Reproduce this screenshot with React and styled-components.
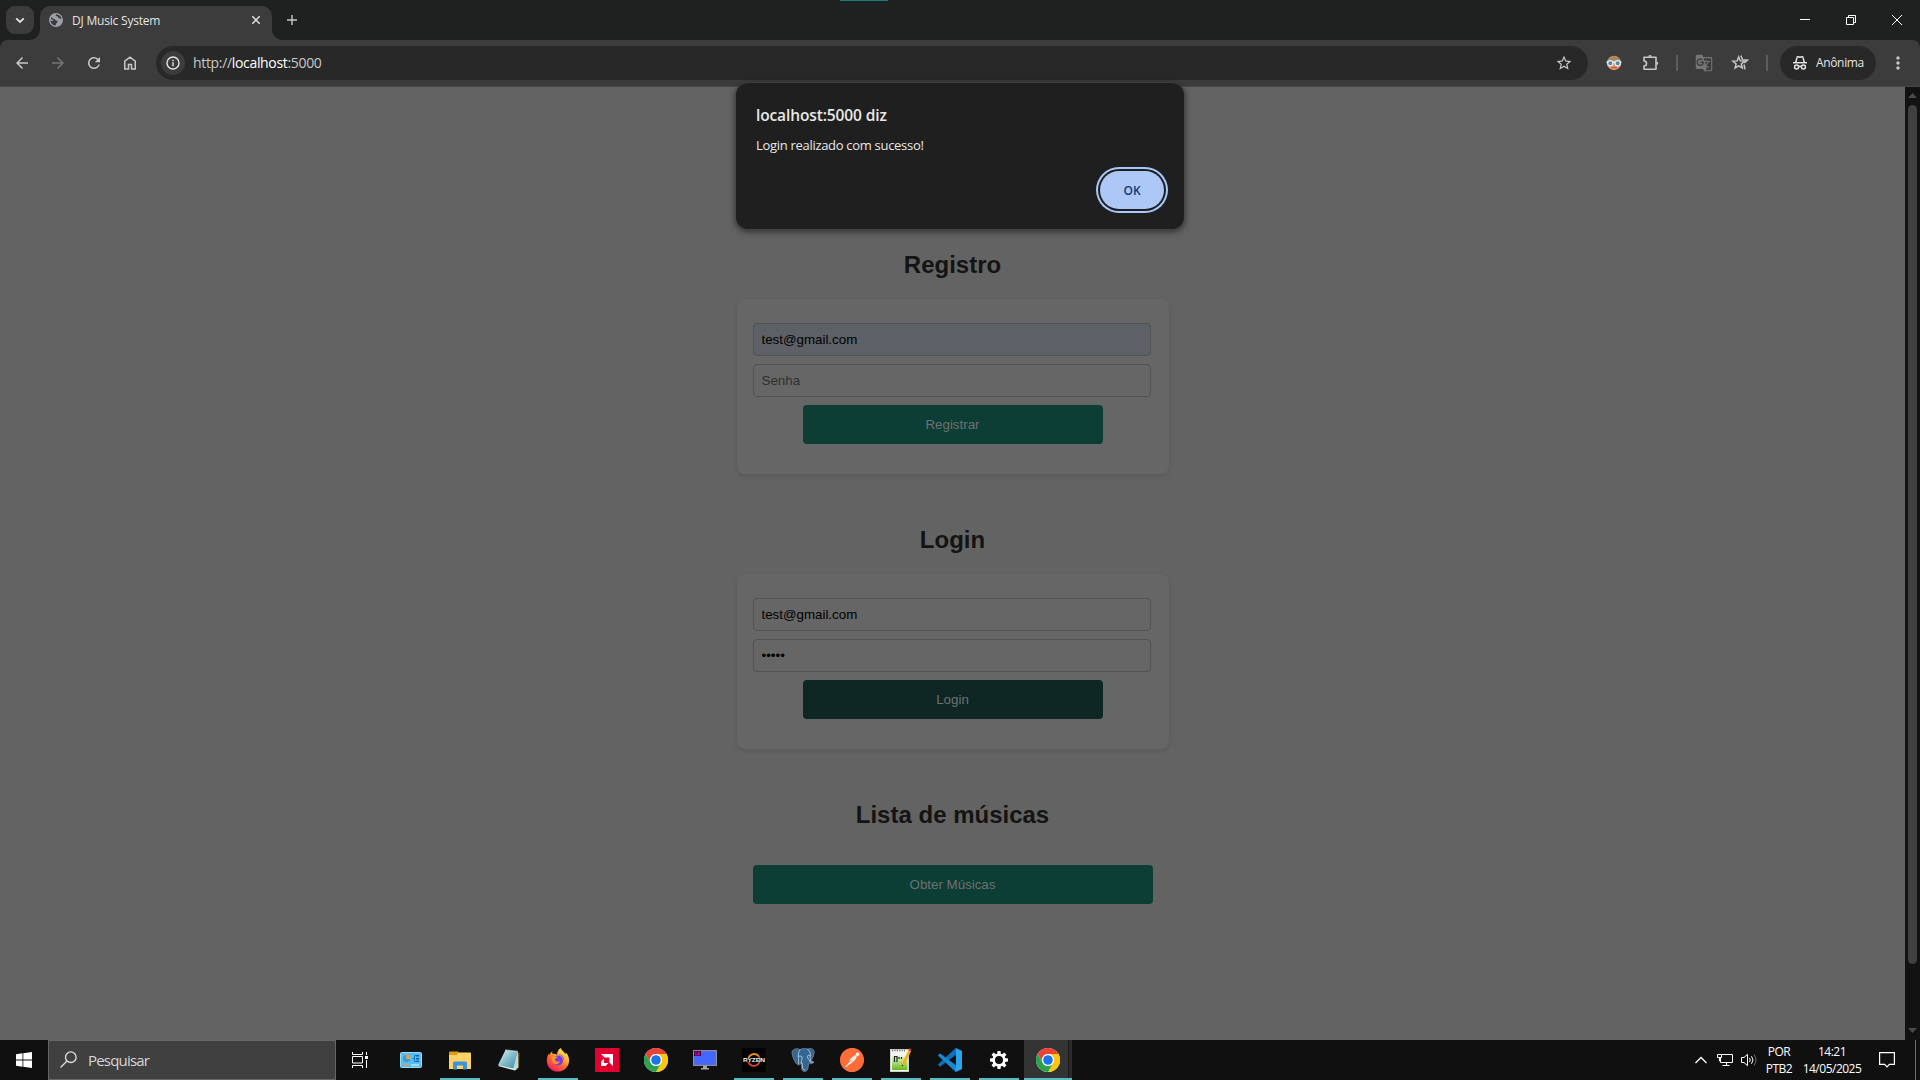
import React from "react";
import styled, { createGlobalStyle } from "styled-components";
import { MdArrowBack, MdArrowForward, MdRefresh, MdStarBorder, MdGTranslate, MdMoreVert } from "react-icons/md";
import { SiPostman } from "react-icons/si";

const Global = createGlobalStyle`
  * { box-sizing: border-box; }
  html, body, #root { height: 100%; }
  body {
    margin: 0;
    overflow: hidden;
    background: #636363;
    font-family: "Open Sans", "Noto Sans", sans-serif;
  }
`;

const Screen = styled.div`
  width: 1920px;
  height: 1080px;
  display: flex;
  flex-direction: column;
  position: relative;
  overflow: hidden;
`;

/* ---------- window frame ---------- */

const TabStrip = styled.header`
  height: 40px;
  flex: none;
  display: flex;
  align-items: flex-start;
  padding: 6px 0 0 6px;
  background: #1f2120;
  color: #e3e3e3;
`;

const AccentLine = styled.div`
  position: absolute;
  top: 0;
  left: 840px;
  width: 48px;
  height: 1px;
  background: #187d78;
`;

const TabMenuButton = styled.button`
  width: 28px;
  height: 28px;
  padding: 0;
  border: 0;
  border-radius: 9px;
  background: #3c3c3c;
  display: grid;
  place-items: center;
`;

const Tab = styled.div`
  position: relative;
  width: 232px;
  height: 34px;
  margin-left: 6px;
  padding: 0 10px 6px 9px;
  border-radius: 10px 10px 0 0;
  background: #3c3c3c;
  display: flex;
  align-items: center;
  &::before, &::after {
    content: "";
    position: absolute;
    bottom: 0;
    width: 10px;
    height: 10px;
  }
  &::before {
    left: -10px;
    background: radial-gradient(circle at 0 0, transparent 9.5px, #3c3c3c 10px);
  }
  &::after {
    right: -10px;
    background: radial-gradient(circle at 100% 0, transparent 9.5px, #3c3c3c 10px);
  }
`;

const TabTitle = styled.span`
  flex: 1;
  margin-left: 9px;
  font-size: 12px;
  line-height: 16px;
  letter-spacing: -0.2px;
  padding-top: 1px;
  white-space: nowrap;
`;

const NewTab = styled.div`
  width: 20px;
  height: 28px;
  margin-left: 10px;
  display: grid;
  place-items: center;
`;

const WindowControls = styled.div`
  margin-left: auto;
  display: flex;
`;

const WindowControl = styled.div`
  width: 46px;
  height: 28px;
  display: grid;
  place-items: center;
`;

/* ---------- toolbar ---------- */

const ToolbarBack = styled.div`
  flex: none;
  background: #1f2120;
`;

const Toolbar = styled.nav`
  height: 47px;
  display: flex;
  align-items: center;
  padding: 0 4px 1px;
  border-radius: 8px 8px 0 0;
  border-bottom: 1px solid #474747;
  background: #3c3c3c;
  color: #c7c7c7;
`;

const ToolButton = styled.div`
  width: 36px;
  height: 34px;
  display: grid;
  place-items: center;
  color: ${(p) => (p.$dim ? "#757575" : "#c7c7c7")};
`;

const Omnibox = styled.div`
  flex: 1;
  height: 34px;
  margin: 0 8px;
  padding: 0 6px 0 5px;
  border-radius: 17px;
  background: #282828;
  display: flex;
  align-items: center;
`;

const SiteInfo = styled.div`
  width: 24px;
  height: 24px;
  border-radius: 50%;
  background: #3c3c3c;
  display: grid;
  place-items: center;
`;

const Url = styled.span`
  flex: 1;
  margin-left: 8px;
  font-size: 14px;
  line-height: 20px;
  letter-spacing: -0.33px;
  color: #c7c7c7;
  b { font-weight: 400; color: #fff; }
`;

const Divider = styled.i`
  width: 2px;
  height: 16px;
  margin: 0 8px;
  background: #5c5c5c;
`;

const IncognitoPill = styled.div`
  width: 96px;
  height: 34px;
  margin: 0 4px;
  padding-left: 12px;
  border-radius: 17px;
  background: #282828;
  display: flex;
  align-items: center;
  gap: 8px;
  color: #e3e3e3;
  font-size: 12px;
  font-weight: 500;
  letter-spacing: -0.35px;
`;

/* ---------- web page ---------- */

const Viewport = styled.div`
  flex: 1;
  display: flex;
  min-height: 0;
`;

const Page = styled.main`
  flex: 1;
  background: #636363;
  display: flex;
  flex-direction: column;
  align-items: center;
  padding-top: 163px;
  font-family: "Liberation Sans", Arial, sans-serif;
`;

const Section = styled.section`
  width: 432px;
  height: 275px;
  flex: none;
`;

const Heading = styled.h2`
  margin: 0;
  height: 49px;
  font-size: 24px;
  line-height: 30px;
  text-align: center;
  color: #141414;
`;

const Card = styled.form`
  height: 175px;
  padding: 24px 16px 0;
  border-radius: 8px;
  background: #666;
  box-shadow: 0 2px 5px rgba(0, 0, 0, 0.1);
  display: flex;
  flex-direction: column;
  align-items: center;
`;

const Field = styled.input`
  align-self: flex-start;
  width: 398px;
  height: 33px;
  margin: 0 0 8px;
  padding: 0 8px;
  border: 1px solid #525252;
  border-radius: 4px;
  outline: 0;
  background: ${(p) => (p.$filled ? "#5d6066" : "#666")};
  color: #000;
  font: 13.333px "Liberation Sans", Arial, sans-serif;
  &::placeholder { color: #303030; opacity: 1; }
`;

const ActionButton = styled.button`
  display: block;
  flex: none;
  width: ${(p) => p.$width};
  height: 39px;
  padding: 0;
  border: 0;
  border-radius: 4px;
  background: ${(p) => (p.$pressed ? "#0e2724" : "#0c3e36")};
  color: #707070;
  font: 13.333px "Liberation Sans", Arial, sans-serif;
`;

const ListAction = styled.div`
  padding: 16px 16px 0;
`;

const ScrollTrack = styled.div`
  width: 15px;
  background: #121212;
  display: flex;
  flex-direction: column;
  align-items: center;
  padding: 6px 0 7px;
`;

const ScrollThumb = styled.div`
  width: 9px;
  height: 859px;
  margin: 7px 0 auto;
  border-radius: 5px;
  background: #404040;
`;

/* ---------- alert ---------- */

const Alert = styled.div`
  position: absolute;
  left: 736px;
  top: 83px;
  width: 448px;
  height: 146px;
  padding: 21px 20px 0;
  border-radius: 12px;
  background: #1f1f1f;
  box-shadow: 0 0 0 1px rgba(70, 70, 70, 0.6), 0 2px 6px 1px rgba(0, 0, 0, 0.5);
  display: flex;
  flex-direction: column;
  color: #e8e8e8;
`;

const AlertTitle = styled.div`
  font-size: 15.5px;
  font-weight: 600;
  line-height: 22px;
  letter-spacing: -0.12px;
`;

const AlertText = styled.div`
  margin-top: 9px;
  font-size: 13px;
  line-height: 20px;
  letter-spacing: -0.3px;
`;

const OkButton = styled.button`
  align-self: flex-end;
  width: 64px;
  height: 38px;
  margin-top: 16px;
  padding: 0;
  border: 0;
  border-radius: 19px;
  background: #adc8f6;
  box-shadow: 0 0 0 2px #1f1f1f, 0 0 0 4px #a8c7fa;
  color: #0b3a7c;
  font: 600 12px "Open Sans", sans-serif;
`;

/* ---------- taskbar ---------- */

const Taskbar = styled.footer`
  height: 40px;
  flex: none;
  display: flex;
  background: #101010;
  color: #fff;
`;

const StartButton = styled.div`
  width: 48px;
  display: grid;
  place-items: center;
`;

const SearchBox = styled.div`
  width: 288px;
  border: 1px solid #666;
  background: #404040;
  display: flex;
  align-items: center;
  padding: 0 0 1px 11px;
  gap: 11px;
  font-size: 15px;
  letter-spacing: -0.8px;
  color: #d6d6d6;
`;

const TaskView = styled.div`
  width: 48px;
  display: grid;
  place-items: center;
`;

const AppList = styled.div`
  display: flex;
  gap: 1px;
  padding-left: 3px;
`;

const AppSlot = styled.div`
  width: 48px;
  height: 40px;
  display: grid;
  place-items: center;
  box-shadow: ${(p) => (p.$active ? "inset 0 -2px #5abcbf" : "none")};
  background: ${(p) => (p.$active ? "linear-gradient(90deg, #333 44px, #1a1a1a 44px, #1a1a1a 45px, #2b2b2b 45px)" : "none")};
  position: relative;
  &::after {
    content: "";
    position: absolute;
    bottom: 0;
    left: 4px;
    width: ${(p) => (p.$running ? "40px" : "0")};
    height: 2px;
    background: #5abcbf;
  }
`;

const Tray = styled.div`
  margin-left: auto;
  display: flex;
  align-items: center;
`;

const TrayIcon = styled.div`
  width: ${(p) => p.$w}px;
  height: 40px;
  display: grid;
  place-items: center;
`;

const TrayText = styled.div`
  width: ${(p) => p.$w}px;
  margin-right: ${(p) => p.$gap || 0}px;
  font-size: 12px;
  line-height: 17px;
  letter-spacing: -0.5px;
  text-align: center;
  white-space: nowrap;
  padding-bottom: 1px;
`;

const ShowDesktop = styled.div`
  width: 5px;
  height: 40px;
  margin-left: 3px;
  border-left: 1px solid #6b6b6b;
`;

/* ---------- drawings ---------- */

const Globe = () => (
  <svg width="14" height="14" viewBox="0 0 14 14">
    <circle cx="7" cy="7" r="7" fill="#9aa0a6" />
    <path d="M2 4.2c1.300.2 1.500 1.600 3 1.700 1.600.1 1.200 1.700 2.700 1.800 1.400.1 1.200 1.600.2 2.100-1 .6-.6 1.800-1.600 2.800C3.600 12.300 1.500 10 1.400 7.200 2.800 8.200 4 8.300 4.600 7.600 3.500 6.800 1.600 6.500 2 4.200z" fill="#3c3c3c" />
    <path d="M7.200 1.400c-1 .9-.3 1.700.8 1.800 1.100.1.700 1.600 1.900 1.700 1.200.2 1.400 1.200 2.500 1 .1-2.300-2.400-4.700-5.200-4.500z" fill="#3c3c3c" />
  </svg>
);

const ChromeLogo = () => (
  <svg width="24" height="24" viewBox="0 0 24 24">
    <circle cx="12" cy="12" r="12" fill="#fff" />
    <path d="M1.600 6A12 12 0 0 1 22.400 6H12a6 6 0 0 0-5.200 9z" fill="#e94335" />
    <path d="M22.400 6A12 12 0 0 1 12 24l5.200-9A6 6 0 0 0 12 6z" fill="#fdc60b" />
    <path d="M12 24A12 12 0 0 1 1.600 6l5.200 9a6 6 0 0 0 10.400 0z" fill="#2ba24c" />
    <circle cx="12" cy="12" r="6" fill="#fff" />
    <circle cx="12" cy="12" r="4.800" fill="#1a73e8" />
  </svg>
);

const ControlPanel = () => (
  <svg width="22" height="17" viewBox="0 0 22 17">
    <rect x=".5" y=".5" width="21" height="15" rx="1" fill="#55bdf0" stroke="#9adcf8" />
    <circle cx="6.500" cy="6.500" r="3.800" fill="#d4effb" />
    <path d="M6.500 6.500V2.700a3.800 3.800 0 1 0 3.800 3.800z" fill="#1777c4" opacity=".75" />
    <path d="M6.500 6.500H10.500a4 4 0 0 0-4-4z" fill="#f59b28" />
    <path d="M12.500 6.500h2M14.500 3.500v6M14.500 3.500h1.500M14.500 9.500h1.500" stroke="#1777c4" fill="none" />
    <path d="M16 3h3v1.500h-3zM16 6h3v1.500h-3zM16 8.700h3v1.300h-3z" fill="#0b63ab" />
    <path d="M3 13h7" stroke="#f59b28" strokeWidth="1.200" />
    <path d="M11 13h8" stroke="#eefaff" />
  </svg>
);

const Folder = () => (
  <svg width="22" height="19" viewBox="0 0 22 19">
    <path d="M0 1.500Q0 .5 1 .5h8l1 1.500H21q1 0 1 1V18H0z" fill="#dd9d14" />
    <path d="M0 4h8l1.500-2.500H21q1 0 1 1V18H0z" fill="#fdd266" />
    <path d="M4 18.500v-6.500q0-1.500 1.500-1.500h11q1.500 0 1.500 1.500v6.500h-4v-4H8v4z" fill="#3c93dd" />
  </svg>
);

const Notepad = () => (
  <svg width="24" height="24" viewBox="0 0 24 24">
    <defs>
      <linearGradient id="np" x1="0" y1="0" x2="1" y2="1">
        <stop offset="0" stopColor="#e2f4f8" />
        <stop offset=".5" stopColor="#82bccb" />
        <stop offset="1" stopColor="#3f8aa0" />
      </linearGradient>
    </defs>
    <path d="M20 4l2.500 1-.5 15-3 2z" fill="#7b5a22" />
    <path d="M20.500 4l.5 15-3 3.500L1 18z" fill="#dfe7e8" />
    <path d="M8.500 2L21 3.500 16.500 20.500 1 17z" fill="url(#np)" />
    <path d="M21 3.500l.2 15.500-3 3.500-1.700-2z" fill="#b5dce5" />
    <path d="M8.500 2L21 3.500" stroke="#cbd0d2" strokeWidth="1.500" strokeDasharray="1.200 .8" />
  </svg>
);

const Firefox = () => (
  <svg width="24" height="24" viewBox="0 0 24 24">
    <defs>
      <linearGradient id="ff" x1=".8" y1="0" x2=".2" y2="1">
        <stop offset="0" stopColor="#fff44f" />
        <stop offset=".35" stopColor="#ffb02c" />
        <stop offset=".65" stopColor="#ff5a36" />
        <stop offset="1" stopColor="#f5156c" />
      </linearGradient>
    </defs>
    <path d="M14.800 0c.7 2.500 3.300 3.500 4.700 6.200.3-.6.300-1.300.2-2 2.200 2 3.400 5.100 3.400 8.200C23 18.800 18 23.500 11.800 23.500S.8 18.700.8 12.400c0-3 1-5.200 2.300-6.800 0 .7.100 1.200.4 1.700C3.800 5.600 4.800 4.400 6.300 3.500 6 4.500 6.200 5.300 7 6c1.600-.4 3 .1 4 .8C11.200 4 12.200 1.500 14.800 0z" fill="url(#ff)" />
    <circle cx="12" cy="12.500" r="5" fill="#7a3be0" />
    <path d="M6 8.500c2.500.5 3.500-.6 6 .8-1.300 1-3 .8-3 2.200 0 2 2.500 3 5 1.600-.6 2.500-3.500 4-6 2.700C6 14.700 5.200 11.500 6 8.500z" fill="#ff9130" />
    <path d="M11.500 6.600c3.500.2 5.700 2.500 5.500 6 .8-1 .9-2 .7-3.200-1-2.500-3.700-4-6.200-2.800z" fill="#9059ff" />
  </svg>
);

const Amd = () => (
  <svg width="24" height="24" viewBox="0 0 24 24">
    <rect width="24" height="24" fill="#e1002f" />
    <path d="M6 6h12v12l-3.600-3.600V9.600H9.600z" fill="#fff" />
    <path d="M9 10.500V15h4.500l-3 3H6v-4.500z" fill="#fff" />
  </svg>
);

const Monitor = () => (
  <svg width="24" height="20" viewBox="0 0 24 20">
    <rect x=".6" y=".6" width="22.800" height="14.800" fill="#4468ff" stroke="#8d8d8d" strokeWidth="1.200" />
    <path d="M10 16h4v2h2v1.500H8V18h2z" fill="#a6a6a6" />
    <rect x="1" y="1" width="7" height="5" fill="#160016" />
    <path d="M4 2H2v3h2V3.700M7.500 2H5.500v3h2M5.500 3.500h1.500" stroke="#e900e9" fill="none" strokeWidth=".9" />
  </svg>
);

const RyzenText = styled.text`
  font: 700 4.8px "Liberation Sans", sans-serif;
`;

const Ryzen = () => (
  <svg width="24" height="24" viewBox="0 0 24 24">
    <rect width="24" height="24" fill="#000" />
    <path d="M6.500 10A6 6 0 0 1 17 8.500" stroke="#f7931e" strokeWidth="1.800" fill="none" />
    <path d="M6.300 14A6 6 0 0 0 15 17" stroke="#e3421f" strokeWidth="1.900" fill="none" />
    <path d="M17 8.500a6 6 0 0 1-2 8.500" stroke="#f15a24" strokeWidth="1.500" fill="none" />
    <RyzenText x="1" y="13.700" fill="#f0f0f0" textLength="22" lengthAdjust="spacingAndGlyphs">RYZEN</RyzenText>
  </svg>
);

const Postgres = () => (
  <svg width="24" height="24" viewBox="0 0 24 24">
    <path d="M1 4C2 0 7 .3 9 1.500 12 0 15 .2 17 1c3-1.300 6.300 0 6.200 3.200-.2 3.600-2.200 7-3.400 9.300l3 .4c-.5 1.600-3.300 2.200-5.300 1.800-.3 3.300-.2 7-3.100 7.800-2.300.4-3.700-1-3.800-3.500l-.3-4.500C8 17.700 6 17.200 4.500 14.500 2.500 11 1 7.500 1 4z" fill="#336791" stroke="#8a9daa" strokeWidth=".6" />
    <g fill="none" stroke="#c5d5e0" strokeWidth=".8" strokeLinecap="round">
      <path d="M9 1.800C7 4 7 7.500 7.500 10.500c.3 2.300-.5 4 .3 5.300" />
      <path d="M7.600 8.500c1.800-1 3.500-.6 3.500 1.500 0 2-1.300 3.200-.8 5.200" />
      <path d="M16.800 1.300c2 2 3 4.300 2.500 6.500-.5 2 .4 3.500.1 5.500" />
      <path d="M19 7.500c-1.400-.5-2.800-.2-2.600 1.200.3 2 1.900 3.200 2.800 5.200l3 .3" />
      <path d="M10.300 15.200c1.600-.9 1.200 1.300 1.200 3.800 0 2 .9 3 2.400 2.900" />
    </g>
  </svg>
);

const Postman = () => (
  <svg width="24" height="24" viewBox="0 0 24 24">
    <circle cx="12" cy="12" r="11.500" fill="#fff" />
    <SiPostman x="0" y="0" size={24} color="#ff6c37" />
  </svg>
);

const Notes = () => (
  <svg width="24" height="24" viewBox="0 0 24 24">
    <defs>
      <linearGradient id="nt" x1="0" y1="0" x2="0" y2="1">
        <stop offset="0" stopColor="#f2fadf" />
        <stop offset="1" stopColor="#61bd1b" />
      </linearGradient>
    </defs>
    <rect x="1.500" y="1.500" width="18" height="22" fill="#f6f6f6" stroke="#cfcfcf" />
    <path d="M3 2.500h13" stroke="#666" strokeWidth="1.500" strokeDasharray="1.200 1.200" />
    <rect x="3" y="7" width="15.500" height="15" fill="url(#nt)" />
    <path d="M5.500 14V8.500H8V14M10 9v2M12.500 9v2" stroke="#222" strokeWidth="1.200" fill="none" />
    <path d="M19.500 2l2.500 1.300L15.500 17l-2.700 1.600.1-3z" fill="#f6b21b" />
    <path d="M19.500 2l.8-2 2.200 1.200-.5 2.100z" fill="#c33a31" />
    <path d="M12.900 16.500l-.1 2.100 1.700-1z" fill="#222" />
  </svg>
);

const VsCode = () => (
  <svg width="24" height="24" viewBox="0 0 24 24">
    <path d="M18 6.700L2.600 18.300q-.6.400-1.200 0l-1-1q-.6-.5 0-1.200L17.200.6q.6-.5 1.300-.4z" fill="#0e70b8" />
    <path d="M18 17.300L2.600 5.700q-.6-.4-1.200 0l-1 1q-.6.500 0 1.200L17.200 23.400q.6.500 1.300.4z" fill="#1787d2" />
    <path d="M17.200 23.400q.8.500 1.500.2l4.600-2.200q.7-.4.700-1.200V3.800q0-.8-.7-1.200L18.700.4q-.7-.3-1.500.2.8-.2.800.8v21.200q0 1-.8.800z" fill="#2ba4ee" />
  </svg>
);

const Gear = () => (
  <svg width="20" height="20" viewBox="-10 -10 20 20">
    {[0, 45, 90, 135, 180, 225, 270, 315].map((a) => (
      <path key={a} d="M-1.900 -5.500L-1.500 -9H1.500L1.900 -5.500z" fill="#fff" transform={`rotate(${a})`} />
    ))}
    <circle r="5.300" fill="none" stroke="#fff" strokeWidth="2.600" />
  </svg>
);

const Avatar = () => (
  <svg width="16" height="16" viewBox="0 0 16 16">
    <circle cx="8" cy="8" r="7.200" fill="#e0906a" />
    <path d="M.9 7A7.200 7.200 0 0 1 15.100 7Q8 4.500 .9 7z" fill="#a58a5e" />
    <path d="M.5 6.500h15v1.500H.5z" fill="#dfe8ea" />
    <circle cx="4.300" cy="8.200" r="2.600" fill="#4f8ba6" stroke="#e3eef0" strokeWidth="1.200" />
    <circle cx="11.700" cy="8.200" r="2.600" fill="#4f8ba6" stroke="#e3eef0" strokeWidth="1.200" />
    <path d="M5.500 13q2.500-1.500 5 0" stroke="#c4502f" fill="none" strokeWidth="1.200" />
  </svg>
);

const Incognito = () => (
  <svg width="16" height="16" viewBox="0 0 16 16" fill="none" stroke="#e3e3e3" strokeWidth="1.500">
    <path d="M1 7.700h14" />
    <path d="M3.700 7.500L5 2.400Q5.200 1.500 6.200 1.700L8 2.200l1.800-.5Q10.800 1.500 11 2.400L12.300 7.500" />
    <circle cx="4.600" cy="12" r="2" />
    <circle cx="11.400" cy="12" r="2" />
    <path d="M6.400 11.600q1.600-.8 3.200 0" />
  </svg>
);

const Puzzle = () => (
  <svg width="18" height="18" viewBox="0 0 18 18" fill="none" stroke="#c7c7c7" strokeWidth="1.600">
    <path d="M3 3.300h12v12H3V12a2.400 2.400 0 0 0 0-5z" strokeLinejoin="round" />
    <path d="M7.200 2.800a1.800 1.800 0 0 1 3.600 0zM15.500 7.500a1.800 1.800 0 0 1 0 3.600z" fill="#c7c7c7" stroke="none" />
  </svg>
);

const StarStack = () => (
  <svg width="18" height="18" viewBox="0 0 18 18" fill="none" stroke="#c7c7c7" strokeWidth="1.500">
    <path d="M7.700 3l1.600 3.900 4.200.3-3.200 2.700 1 4.100-3.600-2.200L4.100 14l1-4.100-3.200-2.700 4.200-.3z" />
    <path d="M9.800 1.500l1.800 4.200 4.800.5-3 2.800M13 10.500l1 4.800" />
  </svg>
);

const svgLine = { fill: "none", stroke: "#fff" };

const apps = [
  { name: "control", icon: <ControlPanel /> },
  { name: "files", icon: <Folder />, running: true },
  { name: "notepad", icon: <Notepad /> },
  { name: "firefox", icon: <Firefox />, running: true },
  { name: "amd", icon: <Amd /> },
  { name: "chrome", icon: <ChromeLogo /> },
  { name: "monitor", icon: <Monitor /> },
  { name: "ryzen", icon: <Ryzen />, running: true },
  { name: "postgres", icon: <Postgres />, running: true },
  { name: "postman", icon: <Postman />, running: true },
  { name: "notes", icon: <Notes />, running: true },
  { name: "code", icon: <VsCode />, running: true },
  { name: "settings", icon: <Gear />, running: true },
  { name: "chrome-active", icon: <ChromeLogo />, active: true },
];

export default function App() {
  return (
    <Screen>
      <Global />
      <TabStrip>
        <TabMenuButton>
          <svg width="10" height="7" viewBox="0 0 10 7" fill="none" stroke="#e3e3e3" strokeWidth="1.800">
            <path d="M1.200 1.300L5 5l3.800-3.700" />
          </svg>
        </TabMenuButton>
        <Tab>
          <Globe />
          <TabTitle>DJ Music System</TabTitle>
          <svg width="12" height="12" viewBox="0 0 12 12" fill="none" stroke="#e3e3e3" strokeWidth="1.500">
            <path d="M2.300 2.300l7.400 7.400M9.700 2.300L2.300 9.700" />
          </svg>
        </Tab>
        <NewTab>
          <svg width="10" height="10" viewBox="0 0 10 10" fill="none" stroke="#c7c7c7" strokeWidth="1.400">
            <path d="M5 0v10M0 5h10" />
          </svg>
        </NewTab>
        <WindowControls>
          <WindowControl>
            <svg width="10" height="10" viewBox="0 0 10 10" {...svgLine}><path d="M0 4.500h10" /></svg>
          </WindowControl>
          <WindowControl>
            <svg width="10" height="10" viewBox="0 0 10 10" {...svgLine}><path d="M.5 2.500h7v7h-7zM2.500 2.500v-2h7v7h-2" /></svg>
          </WindowControl>
          <WindowControl>
            <svg width="10" height="10" viewBox="0 0 10 10" {...svgLine}><path d="M0 0l10 10M10 0L0 10" /></svg>
          </WindowControl>
        </WindowControls>
      </TabStrip>
      <AccentLine />

      <ToolbarBack>
        <Toolbar>
          <ToolButton><MdArrowBack size={18} /></ToolButton>
          <ToolButton $dim><MdArrowForward size={18} /></ToolButton>
          <ToolButton><MdRefresh size={18} /></ToolButton>
          <ToolButton>
            <svg width="18" height="18" viewBox="0 0 24 24" fill="none" stroke="currentColor" strokeWidth="2">
              <path d="M5 20V9.500L12 4.200l7 5.300V20h-5v-6h-4v6z" />
            </svg>
          </ToolButton>
          <Omnibox>
            <SiteInfo>
              <svg width="14" height="14" viewBox="0 0 14 14" fill="none" stroke="#e3e3e3" strokeWidth="1.400">
                <circle cx="7" cy="7" r="6" />
                <path d="M7 6.300v4M7 3.700v1.500" />
              </svg>
            </SiteInfo>
            <Url>http://<b>localhost</b>:5000</Url>
            <ToolButton><MdStarBorder size={18} /></ToolButton>
          </Omnibox>
          <ToolButton><Avatar /></ToolButton>
          <ToolButton><Puzzle /></ToolButton>
          <Divider />
          <ToolButton $dim><MdGTranslate size={18} /></ToolButton>
          <ToolButton><StarStack /></ToolButton>
          <Divider />
          <IncognitoPill><Incognito />Anônima</IncognitoPill>
          <ToolButton><MdMoreVert size={20} /></ToolButton>
        </Toolbar>
      </ToolbarBack>

      <Viewport>
        <Page>
          <Section>
            <Heading>Registro</Heading>
            <Card>
              <Field $filled type="text" defaultValue="test@gmail.com" />
              <Field type="password" placeholder="Senha" />
              <ActionButton type="button" $width="300px">Registrar</ActionButton>
            </Card>
          </Section>
          <Section>
            <Heading>Login</Heading>
            <Card>
              <Field type="text" defaultValue="test@gmail.com" />
              <Field type="password" defaultValue="12345" />
              <ActionButton type="button" $width="300px" $pressed>Login</ActionButton>
            </Card>
          </Section>
          <Section>
            <Heading>Lista de músicas</Heading>
            <ListAction>
              <ActionButton type="button" $width="400px">Obter Músicas</ActionButton>
            </ListAction>
          </Section>
        </Page>
        <ScrollTrack>
          <svg width="9" height="5" viewBox="0 0 9 5"><path d="M0 5L4.500 0 9 5z" fill="#4a4a4a" /></svg>
          <ScrollThumb />
          <svg width="9" height="5" viewBox="0 0 9 5"><path d="M0 0l4.500 5L9 0z" fill="#4a4a4a" /></svg>
        </ScrollTrack>
      </Viewport>

      <Taskbar>
        <StartButton>
          <svg width="16" height="16" viewBox="0 0 16 16" fill="#fff">
            <path d="M0 2.200L6.500 1.300V7.500H0zM7.300 1.200L16 0v7.500H7.300zM0 8.400h6.500v6.300L0 13.800zM7.300 8.400H16V16l-8.700-1.200z" />
          </svg>
        </StartButton>
        <SearchBox>
          <svg width="17" height="17" viewBox="0 0 17 17" fill="none" stroke="#e0e0e0" strokeWidth="1.300">
            <circle cx="10.800" cy="6.200" r="5.300" />
            <path d="M7 10L.5 16.500" />
          </svg>
          Pesquisar
        </SearchBox>
        <TaskView>
          <svg width="16" height="16" viewBox="0 0 16 16" {...svgLine}>
            <path d="M.5 4.500h10v6.500H.5zM.5 0v2.500h10V0M.5 16v-2.500h10V16M14.500 0v3M14.500 8v8" />
            <path d="M13 4h3v3h-3z" fill="#fff" stroke="none" />
          </svg>
        </TaskView>
        <AppList>
          {apps.map((a) => (
            <AppSlot key={a.name} $running={a.running} $active={a.active}>{a.icon}</AppSlot>
          ))}
        </AppList>
        <Tray>
          <TrayIcon $w={24}>
            <svg width="12" height="8" viewBox="0 0 12 8" {...svgLine} strokeWidth="1.300"><path d="M.5 7L6 1.500 11.500 7" /></svg>
          </TrayIcon>
          <TrayIcon $w={24}>
            <svg width="16" height="14" viewBox="0 0 16 14" {...svgLine}>
              <path d="M5 1.500h10.500v8H3.500V5M9.500 9.500v3M5.500 12.500h7M.5 1.500h4v3h-4zM2.500 4.500v3.500h1" />
            </svg>
          </TrayIcon>
          <TrayIcon $w={24}>
            <svg width="17" height="14" viewBox="0 0 17 14" {...svgLine}>
              <path d="M.5 4.500h2.500L6.500 1.300v11.400L3 9.500H.5z" />
              <path d="M8.500 5q1.500 2 0 4M10.500 3.200q3 3.800 0 7.600" />
              <path d="M13 1.500q4 5.500 0 11" stroke="#6e6e6e" />
            </svg>
          </TrayIcon>
          <TrayText $w={36} $gap={5}>POR<br />PTB2</TrayText>
          <TrayText $w={60}>14:21<br />14/05/2025</TrayText>
          <TrayIcon $w={50}>
            <svg width="16" height="16" viewBox="0 0 16 16" {...svgLine} strokeWidth="1.200">
              <path d="M.6.6h14.800v11.800h-5L8 14.800l-2.400-2.400h-5z" />
            </svg>
          </TrayIcon>
          <ShowDesktop />
        </Tray>
      </Taskbar>

      <Alert>
        <AlertTitle>localhost:5000 diz</AlertTitle>
        <AlertText>Login realizado com sucesso!</AlertText>
        <OkButton>OK</OkButton>
      </Alert>
    </Screen>
  );
}
